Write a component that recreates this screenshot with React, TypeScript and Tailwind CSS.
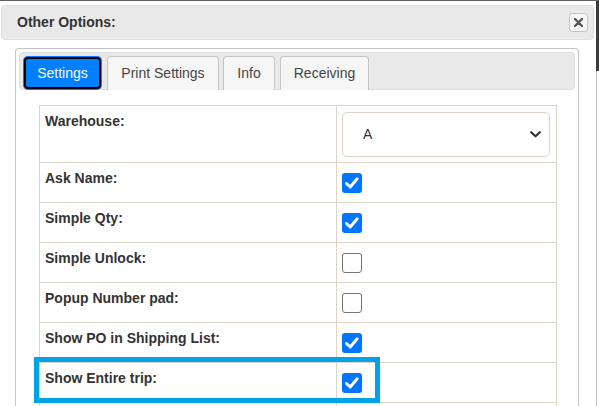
import React from "react";

const rows: { label: string; checked?: boolean }[] = [
  { label: "Ask Name:", checked: true },
  { label: "Simple Qty:", checked: true },
  { label: "Simple Unlock:", checked: false },
  { label: "Popup Number pad:", checked: false },
  { label: "Show PO in Shipping List:", checked: true },
  { label: "Show Entire trip:", checked: true },
  { label: "", checked: false },
];

function Check({ checked }: { checked?: boolean }) {
  if (checked) {
    return (
      <div className="w-[20px] h-[20px] rounded-[3px] bg-[#0075ff] flex items-center justify-center">
        <svg width="20" height="20" viewBox="0 0 20 20">
          <path d="M4.5 10.5 L8.2 14 L15.2 5.8" fill="none" stroke="#fff" strokeWidth="3" strokeLinecap="round" strokeLinejoin="round" />
        </svg>
      </div>
    );
  }
  return <div className="w-[20px] h-[20px] rounded-[3px] border border-[#767676] bg-white" />;
}

export default function App() {
  return (
    <div
      className="relative w-[599px] h-[406px] overflow-hidden bg-white flex flex-col text-[#333]"
      style={{ fontFamily: '"Liberation Sans", Arial, sans-serif' }}
    >
      <div className="h-px bg-[#5f5f5f] shrink-0" />
      <div className="flex flex-1 min-h-0">
        <div className="w-[596px] flex flex-col">
          {/* header */}
          <div className="ml-px mr-[2px] mt-[4px] h-[35px] rounded-[4px] border border-[#dddddd] bg-[#e9e9e9] flex items-center justify-between pl-[15px] pr-[5px] shrink-0">
            <span className="text-[14px] font-bold">Other Options:</span>
            <div className="w-[19px] h-[19px] rounded-[3px] border border-[#c5c5c5] bg-[#f6f6f6] flex items-center justify-center">
              <svg width="9" height="9" viewBox="0 0 9 9">
                <path d="M1 1 L8 8 M8 1 L1 8" stroke="#555" strokeWidth="2.4" strokeLinecap="round" />
              </svg>
            </div>
          </div>
          {/* content panel */}
          <div className="ml-[15px] w-[564px] mt-[8px] flex-1 border border-b-0 border-[#c5c5c5] rounded-t-[4px] p-[3px]">
            {/* tab bar */}
            <div className="h-[38px] rounded-[4px] border border-[#dddddd] bg-[#e9e9e9] flex items-start pt-[3px] pl-[3px]">
              <div className="w-[79px] h-[34px] rounded-[5px] bg-[#007fff] p-px">
                <div className="w-full h-full rounded-[4px] border-2 border-black flex items-center justify-center text-white text-[14px]">
                  Settings
                </div>
              </div>
              <div className="ml-[5px] w-[112px] h-[34px] rounded-t-[4px] border border-b-0 border-[#c5c5c5] bg-[#f6f6f6] flex items-center justify-center text-[14px] text-[#454545]">
                Print Settings
              </div>
              <div className="ml-[4px] w-[52px] h-[34px] rounded-t-[4px] border border-b-0 border-[#c5c5c5] bg-[#f6f6f6] flex items-center justify-center text-[14px] text-[#454545]">
                Info
              </div>
              <div className="ml-[5px] w-[89px] h-[34px] rounded-t-[4px] border border-b-0 border-[#c5c5c5] bg-[#f6f6f6] flex items-center justify-center text-[14px] text-[#454545]">
                Receiving
              </div>
            </div>
            {/* table */}
            <div className="ml-[20px] mt-[15px] w-[518px] border-l border-t border-r border-[#ded5c9]">
              <div className="flex h-[57px] border-b border-[#ded5c9]">
                <div className="w-[297px] border-r border-[#ded5c9] pl-[5px] pt-[5px] text-[14px] leading-[20px] font-bold">
                  Warehouse:
                </div>
                <div className="flex-1 pl-[5px] pr-[6px] pt-[6px]">
                  <div className="h-[45px] rounded-[5px] border border-[#ded5c9] bg-white flex items-center justify-between pl-[20px] pr-[8px]">
                    <span className="text-[14px] text-[#333]">A</span>
                    <svg width="11" height="7" viewBox="0 0 11 7">
                      <path d="M1.2 1.2 L5.5 5.3 L9.8 1.2" fill="none" stroke="#333" strokeWidth="2.2" strokeLinecap="round" strokeLinejoin="round" />
                    </svg>
                  </div>
                </div>
              </div>
              {rows.map((r, i) => (
                <div key={i} className="flex h-[40px] border-b border-[#ded5c9]">
                  <div className="w-[297px] border-r border-[#ded5c9] pl-[5px] pt-[5px] text-[14px] leading-[20px] font-bold">
                    {r.label}
                  </div>
                  <div className="flex-1 pl-[5px] flex items-center">
                    <Check checked={r.checked} />
                  </div>
                </div>
              ))}
            </div>
          </div>
        </div>
        <div className="w-[3px] flex flex-col">
          <div className="h-[70px] bg-[#3c3c3c]" />
          <div className="flex-1 flex">
            <div className="w-px bg-[#bdbdbd]" />
            <div className="flex-1 bg-white" />
          </div>
        </div>
      </div>
      {/* highlight */}
      <div className="absolute left-[34px] top-[357px] w-[346px] h-[46px] border-[5px] border-[#00a2e8]" />
    </div>
  );
}
